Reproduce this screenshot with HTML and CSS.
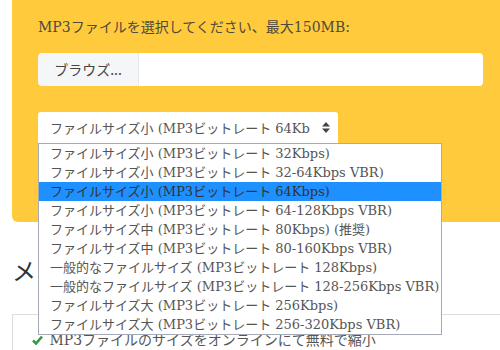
FILE: index.html
```html
<!DOCTYPE html>
<html lang="ja">
<head>
    <meta charset="UTF-8">
    <title>MP3圧縮</title>
    <link rel="stylesheet" href="styles.css">
</head>
<body>
    <div class="panel">
        <p class="label">MP3ファイルを選択してください、最大150MB:</p>
        <div class="file-row">
            <div class="browse">ブラウズ...</div>
            <div class="file-name"></div>
        </div>
        <div class="select-wrap">
            <div class="select">
                <span class="select-text">ファイルサイズ小 (MP3ビットレート 64Kb</span>
                <svg class="arrows" width="8" height="11" viewBox="0 0 8 11">
                    <path d="M4 0 L8 4.5 L0 4.5 Z M4 11 L8 6.5 L0 6.5 Z" fill="#444"/>
                </svg>
            </div>
            <ul class="options">
                <li>ファイルサイズ小 (MP3ビットレート 32Kbps)</li>
                <li>ファイルサイズ小 (MP3ビットレート 32-64Kbps VBR)</li>
                <li class="selected">ファイルサイズ小 (MP3ビットレート 64Kbps)</li>
                <li>ファイルサイズ小 (MP3ビットレート 64-128Kbps VBR)</li>
                <li>ファイルサイズ中 (MP3ビットレート 80Kbps) (推奨)</li>
                <li>ファイルサイズ中 (MP3ビットレート 80-160Kbps VBR)</li>
                <li>一般的なファイルサイズ (MP3ビットレート 128Kbps)</li>
                <li>一般的なファイルサイズ (MP3ビットレート 128-256Kbps VBR)</li>
                <li>ファイルサイズ大 (MP3ビットレート 256Kbps)</li>
                <li>ファイルサイズ大 (MP3ビットレート 256-320Kbps VBR)</li>
            </ul>
        </div>
    </div>

    <h2 class="title">メ</h2>

    <div class="features">
        <p class="feature">
            <svg class="check" width="11" height="10" viewBox="0 0 11 10">
                <path d="M1 5.5 L4 8.5 L10 1.5" fill="none" stroke="#2e9e3e" stroke-width="2.6"/>
            </svg>
            MP3ファイルのサイズをオンラインにて無料で縮小
        </p>
    </div>
</body>
</html>
```

FILE: styles.css
```css
body {
    margin: 0;
    background: #fff;
    font-family: 'DejaVu Serif', 'Noto Sans CJK JP', serif;
    color: #555;
    overflow: hidden;
}
.panel {
    margin-left: 12px;
    height: 222px;
    box-sizing: border-box;
    padding: 17px 17px 0 26px;
    background: #ffca3c;
    border-radius: 0 0 0 6px;
}
.label {
    margin: 0;
    font-size: 14px;
    line-height: 20px;
    color: #4f4a3c;
}
.file-row {
    display: flex;
    height: 33px;
    margin-top: 16px;
}
.browse {
    width: 100px;
    background: #f5f6f7;
    border-radius: 4px 0 0 4px;
    font-family: 'Noto Sans CJK JP', sans-serif;
    font-size: 14px;
    line-height: 33px;
    text-align: center;
    color: #444;
    border-right: 1px solid #e8e8e8;
}
.file-name {
    flex: 1;
    background: #fff;
    border-radius: 0 4px 4px 0;
}
.select-wrap {
    position: relative;
    margin-top: 26px;
}
.select {
    display: flex;
    align-items: center;
    width: 300px;
    height: 31px;
    box-sizing: border-box;
    padding: 0 8px 0 12px;
    background: #fff;
    border-radius: 3px 3px 0 0;
    font-size: 13px;
}
.select-text {
    flex: 1;
    white-space: nowrap;
}
.arrows {
    margin-left: 6px;
}
.options {
    position: absolute;
    left: 0;
    top: 31px;
    width: 404px;
    margin: 0;
    padding: 0;
    list-style: none;
    box-sizing: border-box;
    background: #fff;
    border: 1px solid #a4abb6;
    font-size: 13px;
    z-index: 10;
}
.options li {
    height: 19px;
    line-height: 19px;
    padding-left: 11px;
    white-space: nowrap;
    color: #555;
}
.options li.selected {
    background: #1e90ff;
    color: #333;
}
.title {
    margin: 36px 0 0 12px;
    font-family: 'Noto Sans CJK JP', sans-serif;
    font-size: 24px;
    font-weight: normal;
    line-height: 24px;
    color: #333;
}
.features {
    margin: 32px 0 0 12px;
    border: 1px solid #ddd;
    border-right: none;
    border-bottom: none;
    padding: 15px 0 0 19px;
    height: 20px;
}
.feature {
    margin: 0;
    font-size: 14px;
    line-height: 20px;
}
.check {
    margin-right: 2px;
}
```
